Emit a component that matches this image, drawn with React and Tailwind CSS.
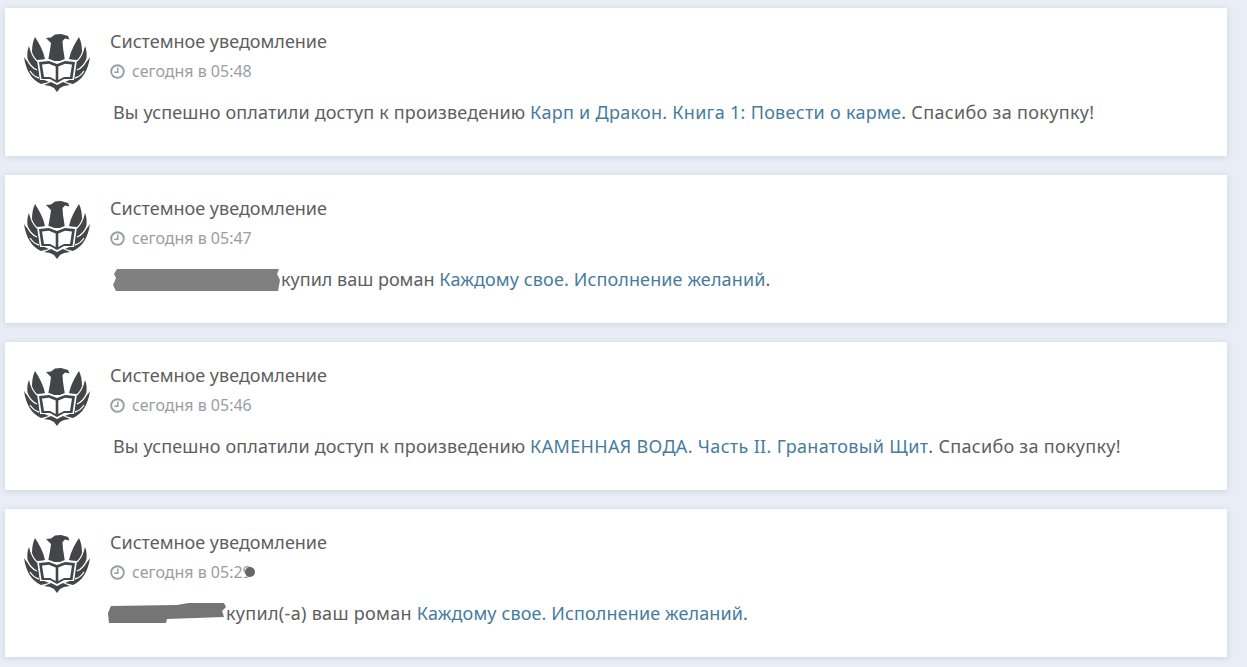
import React from 'react';

// tracking is per run: the reference's hinted glyph advances are wider by a varying amount
const items = [
  { time: '05:48', before: 'Вы успешно оплатили доступ к произведению ', beforeFit: 'tracking-[0.14px]', link: 'Карп и Дракон. Книга 1: Повести о карме', linkFit: 'tracking-[0.28px]', after: '. Спасибо за покупку!', afterFit: 'tracking-[0.33px]' },
  { time: '05:47', redact: 'long', before: 'купил ваш роман ', beforeFit: '', link: 'Каждому свое. Исполнение желаний', linkFit: 'tracking-[0.12px]', after: '.', afterFit: '' },
  { time: '05:46', before: 'Вы успешно оплатили доступ к произведению ', beforeFit: 'tracking-[0.14px]', link: 'КАМЕННАЯ ВОДА. Часть II. Гранатовый Щит', linkFit: 'tracking-[0.33px]', after: '. Спасибо за покупку!', afterFit: 'tracking-[0.29px]' },
  { time: '05:29', dot: true, redact: 'short', before: 'купил(-а) ваш роман ', beforeFit: 'tracking-[0.3px]', link: 'Каждому свое. Исполнение желаний', linkFit: 'tracking-[0.12px]', after: '.', afterFit: '' },
];

function Logo() {
  return (
    <svg viewBox="0 0 66 60" className="w-[66px] h-[60px] shrink-0 text-[#434549]" fill="currentColor">
      {/* head and neck */}
      <path d="M22 5 L27 4.5 L31 1.5 L37 1 L44 3 L45.5 6.5 L41 5.5 L38.5 8 L39 15 L41 28 L24 28 L26 17 L27 10 Z" />
      {/* wings */}
      <path d="M11 4 C15 10 19 17 21 26 L14 29 L16 45 L25 49 L17 51 C8 47 2 38 0 24 C2 27 3 28 4 29 C3 22 3 18 5 13 C6 16 7 18 8 19 C8 13 9 8 11 4 Z" />
      <path d="M55 4 C51 10 47 17 45 26 L52 29 L50 45 L41 49 L49 51 C58 47 64 38 66 24 C64 27 63 28 62 29 C63 22 63 18 61 13 C60 16 59 18 58 19 C58 13 57 8 55 4 Z" />
      {/* feather gaps */}
      <path stroke="#fff" strokeWidth="1.3" fill="none" d="M6 14 C7 20 9 24 13 28 M3 26 C5 31 8 35 13 37 M6 38 C8 41 11 44 15 45 M60 14 C59 20 57 24 53 28 M63 26 C61 31 58 35 53 37 M60 38 C58 41 55 44 51 45" />
      {/* book: white frame, dark outline, white pages */}
      <path fill="#fff" d="M13 27 L25 26 L33 29 L41 26 L53 27 L50 47 L41 47 L33 51 L25 47 L16 47 Z" />
      <path d="M15 29 L25 28 L33 31 L41 28 L51 29 L48.5 46 L40 46 L33 50 L26 46 L17.5 46 Z" />
      <path fill="#fff" d="M18 31.5 L25 30.8 L31.7 33.5 L31.7 47 L26 44 L20 44 Z M34.3 33.5 L41 30.8 L48 31.5 L46 44 L40 44 L34.3 47 Z" />
      {/* tail */}
      <path d="M20 52 L27 49 L33 52 L39 49 L46 52 L40 53 L36 55 L33 59 L30 55 L26 53 Z" />
    </svg>
  );
}

function ClockIcon() {
  return (
    <svg viewBox="0 0 15 15" className="w-[15px] h-[15px] shrink-0 text-[#9a9da3]" fill="none" stroke="currentColor">
      <circle cx="7.5" cy="7.5" r="6.3" strokeWidth="1.9" />
      <path d="M7.8 3.6 V8.2 H4.2" strokeWidth="1.5" />
    </svg>
  );
}

function Redact({ kind }) {
  if (kind === 'long') {
    return (
      <svg viewBox="0 0 168 24" className="inline-block w-[168px] h-6 align-[-6px] text-[#808080]" fill="currentColor">
        <path d="M4 1 L166 1 L164 6 L167 12 L165 23 L3 23 L0 17 L3 10 L1 6 Z" />
      </svg>
    );
  }
  return (
    <svg viewBox="0 0 120 22" className="inline-block w-[118px] h-[22px] align-[-5px] text-[#757575]" fill="currentColor" preserveAspectRatio="none">
      <path d="M3 3 L70 2 L82 0 L118 0 L120 4 L116 8 L118 14 L60 16 L59 20 L1 20 L0 10 Z" />
    </svg>
  );
}

function Card({ item }) {
  return (
    <div className="h-[148px] bg-white shadow-[0_1px_6px_rgba(150,165,190,0.35)] pt-[22px] pl-[19px] flex gap-[20px]">
      <div className="pt-[3px]"><Logo /></div>
      <div className="min-w-0 flex-1">
        <div className="text-[18px] leading-[22px] text-[#5c5e60]">Системное уведомление</div>
        <div className="mt-[9px] flex items-center gap-[7px] text-[16px] leading-[20px] text-[#9a9da3]">
          <ClockIcon />
          <span className="relative">
            сегодня в {item.time}
            {item.dot && <span className="absolute right-[-3px] top-[5px] w-[10px] h-[10px] rounded-full bg-[#666]" />}
          </span>
        </div>
        <div className={`mt-[19px] text-[18px] leading-[24px] text-[#5c5e60] whitespace-nowrap ${item.redact === 'short' ? '-ml-[2px]' : 'ml-[3px]'}`}>
          {item.redact && <Redact kind={item.redact} />}
          <span className={item.beforeFit}>{item.before}</span>
          <a className={`text-[#467c9d] ${item.linkFit}`}>{item.link}</a>
          <span className={item.afterFit}>{item.after}</span>
        </div>
      </div>
    </div>
  );
}

export default function App() {
  return (
    <div className="w-[1247px] h-[667px] overflow-hidden bg-[#e9edf5] pt-2 pl-[5px] pr-5 font-['Noto_Sans','Open_Sans',sans-serif]">
      <div className="flex flex-col gap-[19px]">
        {items.map(item => <Card key={item.time} item={item} />)}
      </div>
    </div>
  );
}
